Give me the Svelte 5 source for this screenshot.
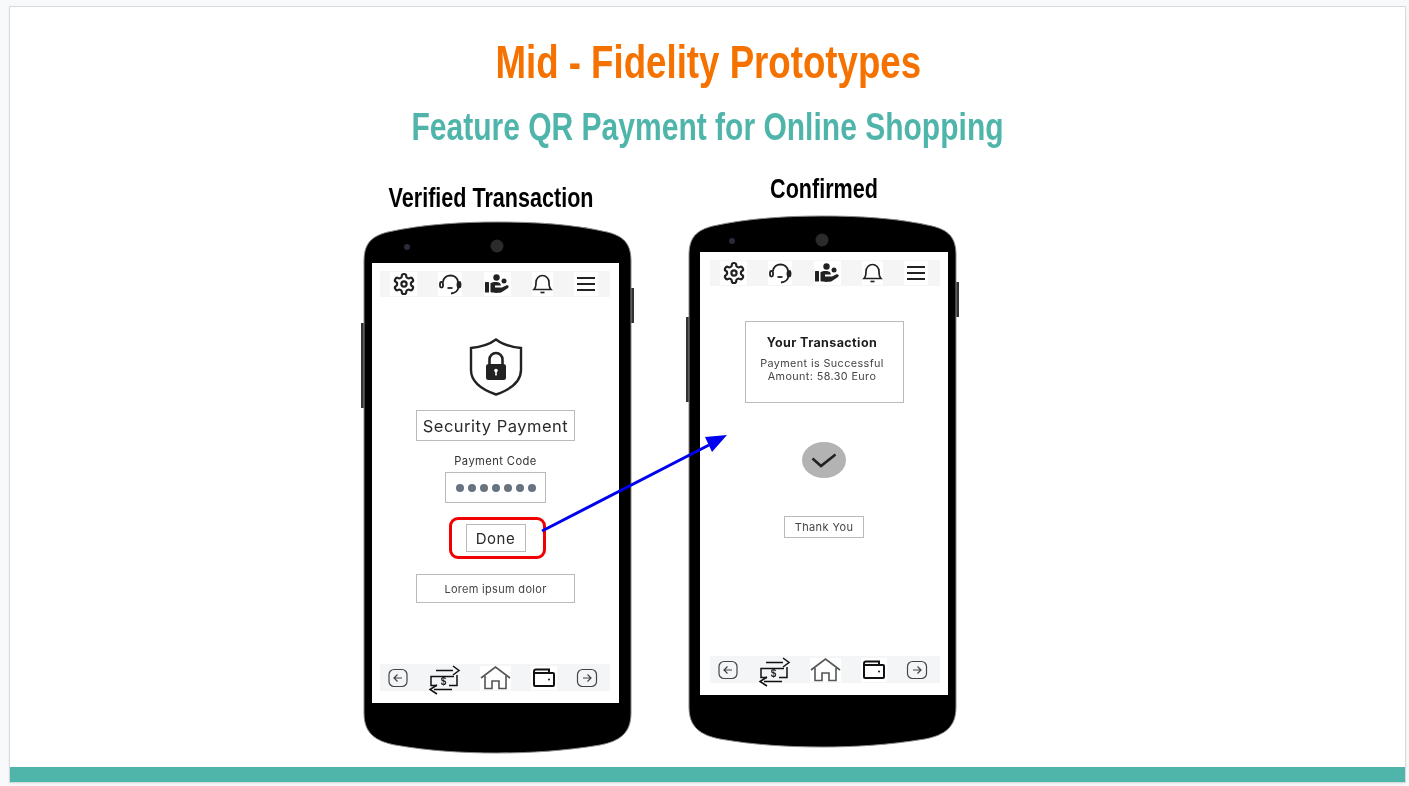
<script>
  // Mid-fidelity prototype slide: two phone mockups joined by an arrow
</script>

{#snippet topBar()}
  <div class="bar top-bar">
    <span class="icon-box" style="width:27px">
      <svg width="24" height="24" viewBox="0 0 24 24" fill="none" stroke="#222" stroke-width="2.200">
        <path d="M12.22 2h-.44a2 2 0 0 0-2 2v.18a2 2 0 0 1-1 1.73l-.43.25a2 2 0 0 1-2 0l-.15-.08a2 2 0 0 0-2.73.73l-.22.38a2 2 0 0 0 .73 2.73l.15.1a2 2 0 0 1 1 1.72v.51a2 2 0 0 1-1 1.74l-.15.09a2 2 0 0 0-.73 2.73l.22.38a2 2 0 0 0 2.73.73l.15-.08a2 2 0 0 1 2 0l.43.25a2 2 0 0 1 1 1.73V20a2 2 0 0 0 2 2h.44a2 2 0 0 0 2-2v-.18a2 2 0 0 1 1-1.73l.43-.25a2 2 0 0 1 2 0l.15.08a2 2 0 0 0 2.73-.73l.22-.39a2 2 0 0 0-.73-2.73l-.15-.08a2 2 0 0 1-1-1.74v-.5a2 2 0 0 1 1-1.74l.15-.09a2 2 0 0 0 .73-2.73l-.22-.38a2 2 0 0 0-2.73-.73l-.15.08a2 2 0 0 1-2 0l-.43-.25a2 2 0 0 1-1-1.73V4a2 2 0 0 0-2-2z" />
        <circle cx="12" cy="12" r="2.600" />
      </svg>
    </span>
    <span class="icon-box" style="width:24px">
      <svg width="24" height="24" viewBox="0 0 24 24" fill="none" stroke="#222" stroke-width="1.800">
        <path d="M5 10 C5.500 5.500 9 3.500 12.500 3.500 C16 3.500 19.500 5.500 20 10" />
        <path d="M20.500 15 C20 19 17 21 13 21.500" />
        <path d="M9.500 16h5" />
        <rect x="2" y="10" width="3" height="5.500" rx="1.500" />
        <rect x="19.500" y="10" width="3" height="5.500" rx="1.500" fill="#222" />
      </svg>
    </span>
    <span class="icon-box" style="width:27px">
      <svg width="26" height="20" viewBox="0 0 26 20" fill="#222">
        <circle cx="12.500" cy="3.500" r="3.200" />
        <circle cx="20" cy="7" r="2.500" />
        <rect x="1" y="8" width="4" height="10.500" rx="0.500" />
        <path d="M6.500 9 C9 7.500 14 7.500 16 9 L17 11.500 L11 11.500 L11 13.500 L18 13.500 L22 11.500 C24.500 10.500 25.500 12.500 24 14 L18 18 C16 19.200 9 19.200 6.500 18z" />
      </svg>
    </span>
    <span class="icon-box" style="width:21px">
      <svg width="21" height="20" viewBox="0 0 21 20" fill="none" stroke="#222" stroke-width="1.700">
        <path d="M2 15.500h17 C17 13.500 17 12 17 8.500 C17 4.500 14 1.500 10.500 1.500 C7 1.500 4 4.500 4 8.500 C4 12 4 13.500 2 15.500z" />
        <path d="M8.500 18.500h4" />
      </svg>
    </span>
    <span class="icon-box" style="width:24px">
      <svg width="20" height="16" viewBox="0 0 20 16" fill="none" stroke="#222" stroke-width="2">
        <path d="M1 2h18M1 8h18M1 14h18" />
      </svg>
    </span>
  </div>
{/snippet}

{#snippet bottomBar()}
  <div class="bar bottom-bar">
    <svg width="20" height="20" viewBox="0 0 20 20" fill="none" stroke="#444" stroke-width="1.200">
      <rect x="1" y="1.500" width="18" height="17" rx="5" />
      <path d="M14 10H6M9.500 6.500 6 10l3.500 3.500" />
    </svg>
    <svg class="transfer" width="33" height="28" viewBox="0 0 33 28" fill="none" stroke="#111" stroke-width="1.500">
      <path d="M8 6.500h17M25 2l6 4.500-6 4.500" />
      <path d="M26 12.500H3v9h6M29 11v10.500h-8" />
      <path d="M24 25.500H6M9 21 2 25.500 9 30" />
      <text x="15.500" y="21" class="dollar">$</text>
    </svg>
    <span class="icon-box" style="width:31px">
      <svg width="31" height="24" viewBox="0 0 31 24" fill="none" stroke="#555" stroke-width="1.600">
        <path d="M1 12 15.500 1 30 12" />
        <path d="M5 10v12.500h7V15h7v7.500h7V10" />
      </svg>
    </span>
    <span class="icon-box" style="width:26px">
      <svg width="23" height="20" viewBox="0 0 23 20" fill="none" stroke="#111" stroke-width="2">
        <path d="M2 17V3.500C2 2 3 1.500 4 1.500h13v3" />
        <rect x="2" y="5" width="20" height="13" rx="1" />
        <circle cx="17" cy="11.500" r="1" fill="#111" stroke="none" />
      </svg>
    </span>
    <svg width="22" height="20" viewBox="0 0 22 20" fill="none" stroke="#444" stroke-width="1.200">
      <rect x="1.500" y="1.500" width="19" height="17" rx="5" />
      <path d="M7 10h8M11.500 6.500 15 10l-3.500 3.500" />
    </svg>
  </div>
{/snippet}

{#snippet body()}
  <svg class="phone-body" width="273" height="533" viewBox="-3 0 273 533">
    <rect x="-3" y="102" width="4" height="85" fill="#333" />
    <rect x="266" y="67" width="4" height="35" fill="#333" />
    <path
      d="M0 40 C0 22 8 15 24 11 C60 3 100 1 133 1 C170 1 208 3 243 11 C259 15 267 22 267 40 L267 492 C267 512 256 520 236 524 C200 530 165 532 133 532 C100 532 65 530 31 524 C11 520 0 512 0 492Z"
      fill="#000"
      stroke="#888"
      stroke-width="1"
    />
    <circle cx="43" cy="26" r="3" fill="#2a2a3c" />
    <circle cx="133" cy="25" r="6.500" fill="#2b2b2b" />
  </svg>
{/snippet}

<div class="page">
  <div class="slide">
    <h1>Mid - Fidelity Prototypes</h1>
    <h2>Feature QR Payment for Online Shopping</h2>

    <div class="stage">
      <section class="col col-verified">
        <h3><span>Verified Transaction</span></h3>
        <div class="phone">
          {@render body()}
          <div class="screen">
            {@render topBar()}
            <svg class="shield" width="54" height="58" viewBox="0 0 54 58">
              <path d="M27 1.500 C33 6 42 9 52 10 V32 C52 44 40 52 27 56.500 C14 52 2 44 2 32 V10 C12 9 21 6 27 1.500Z" fill="none" stroke="#222" stroke-width="2.400" />
              <path d="M20.500 27v-5.500a6.500 6.500 0 0 1 13 0V27" fill="none" stroke="#222" stroke-width="2.600" />
              <rect x="17" y="26" width="20" height="16" rx="2.500" fill="#222" />
              <circle cx="27" cy="32.500" r="1.800" fill="#fff" />
              <rect x="26.200" y="33" width="1.600" height="4.500" fill="#fff" />
            </svg>
            <div class="box security">Security Payment</div>
            <div class="code-label">Payment Code</div>
            <div class="box code">
              {#each Array(7) as _}
                <span class="dot"></span>
              {/each}
            </div>
            <div class="done-ring">
              <div class="box done">Done</div>
            </div>
            <div class="box lorem">Lorem ipsum dolor</div>
            {@render bottomBar()}
          </div>
        </div>
      </section>

      <section class="col col-confirmed">
        <h3><span>Confirmed</span></h3>
        <div class="phone">
          {@render body()}
          <div class="screen">
            {@render topBar()}
            <div class="box summary">
              <strong>Your Transaction</strong>
              <p>Payment is Successful<br />Amount: 58.30 Euro</p>
            </div>
            <div class="check">
              <svg width="26" height="15" viewBox="0 0 26 15" fill="none" stroke="#222" stroke-width="2.600">
                <path d="M1.500 5.500 10 13 24.500 1.500" />
              </svg>
            </div>
            <div class="box thanks">Thank You</div>
            {@render bottomBar()}
          </div>
        </div>
      </section>

      <svg class="arrow" width="200" height="110" viewBox="0 0 200 110">
        <line x1="7" y1="100" x2="174" y2="14" stroke="#0000f0" stroke-width="3" />
        <polygon points="192,4 170,6 177,21" fill="#0000f0" />
      </svg>
    </div>

    <div class="footer-band"></div>
  </div>
</div>

<style>
  :global(body) {
    margin: 0;
    background: #f8f9fa;
  }

  .page {
    height: 786px;
    box-sizing: border-box;
    padding: 7px 4px 4px 10px;
    overflow: hidden;
  }

  .slide {
    height: 100%;
    display: flex;
    flex-direction: column;
    background: #fff;
    box-shadow: 0 0 0 1px #d9d9d9, 0 1px 3px rgba(0, 0, 0, 0.12);
    font-family: "Liberation Sans", sans-serif;
  }

  h1,
  h2,
  h3 {
    margin: 0;
    text-align: center;
    font-weight: 700;
    white-space: nowrap;
  }

  /* no narrow face is installed, so the headings are squeezed sideways */
  h1 {
    margin-top: 27px;
    padding-left: 2px;
    font-size: 47px;
    line-height: 56px;
    color: #f57200;
    transform: scaleX(0.78);
  }

  h2 {
    margin-top: 11px;
    font-size: 39.500px;
    line-height: 50px;
    color: #4fb5ab;
    transform: scaleX(0.76);
  }

  .stage {
    flex: 1;
    min-height: 0;
    position: relative;
    display: flex;
    align-items: flex-start;
    padding-left: 354px;
    gap: 58px;
  }

  .col {
    width: 267px;
    flex: none;
  }

  h3 {
    display: flex;
    justify-content: center;
    font-size: 28px;
    line-height: 34px;
    color: #000;
  }

  h3 span {
    transform: scaleX(0.77);
  }

  .col-verified {
    margin-top: 30px;
  }

  .col-verified h3 {
    margin-right: 13px;
    margin-bottom: 6px;
  }

  .col-confirmed {
    margin-top: 21px;
  }

  .col-confirmed h3 {
    margin-left: 3px;
    margin-bottom: 9px;
  }

  .phone {
    position: relative;
    height: 533px;
    filter: blur(0.45px);
  }

  .phone-body {
    position: absolute;
    top: 0;
    left: -3px;
  }

  .screen {
    position: absolute;
    display: flex;
    flex-direction: column;
    align-items: center;
    box-sizing: border-box;
    background: #fff;
    font-family: Inter, "Liberation Sans", sans-serif;
    color: #333;
  }

  .col-verified .screen {
    left: 8px;
    top: 42px;
    width: 247px;
    height: 440px;
    padding: 8px 0 12px;
  }

  .col-confirmed .screen {
    left: 11px;
    top: 37px;
    width: 248px;
    height: 443px;
    padding: 8px 0 12px;
  }

  .bar {
    flex: none;
    align-self: flex-start;
    width: 230px;
    height: 26px;
    display: flex;
    align-items: center;
    justify-content: space-between;
    box-sizing: border-box;
  }

  .col-verified .bar {
    margin-left: 8px;
  }

  .col-confirmed .bar {
    margin-left: 10px;
  }

  .top-bar {
    background: #f5f5f5;
    padding: 0 12px 0 10px;
  }

  .col-verified .bottom-bar,
  .col-confirmed .bottom-bar {
    margin-top: auto;
  }

  .bottom-bar {
    height: 27px;
    background: #f4f5f7;
    padding: 0 12px 0 8px;
  }

  .icon-box {
    display: flex;
    align-items: center;
    justify-content: center;
    height: 24px;
    background: #fff;
  }

  .dollar {
    font-family: "Liberation Sans", sans-serif;
    font-size: 10px;
    font-weight: 700;
    fill: #222;
    stroke: none;
    text-anchor: middle;
  }

  .transfer {
    overflow: visible;
  }

  .box {
    flex: none;
    display: flex;
    align-items: center;
    justify-content: center;
    box-sizing: border-box;
    border: 1px solid #bbb;
    background: #fff;
  }

  .shield {
    flex: none;
    margin-top: 41px;
    margin-bottom: 14px;
  }

  .security {
    width: 159px;
    height: 31px;
    font-size: 16.500px;
    letter-spacing: 0.5px;
    white-space: nowrap;
    color: #2a2a2a;
  }

  .code-label {
    margin-top: 13px;
    font-size: 11.200px;
    line-height: 14px;
    letter-spacing: 0.4px;
  }

  .code {
    width: 101px;
    height: 31px;
    margin-top: 4px;
    gap: 4px;
  }

  .dot {
    width: 8px;
    height: 8px;
    border-radius: 50%;
    background: #667380;
  }

  .done-ring {
    flex: none;
    display: flex;
    align-items: center;
    justify-content: center;
    box-sizing: border-box;
    width: 97px;
    height: 42px;
    margin: 14px 0 0 4px;
    padding-right: 4px;
    border: 3px solid #f00000;
    border-radius: 9px;
  }

  .done {
    width: 60px;
    height: 28px;
    font-size: 15px;
    letter-spacing: 0.5px;
    color: #2a2a2a;
  }

  .lorem {
    width: 159px;
    height: 29px;
    margin-top: 15px;
    font-size: 11px;
    letter-spacing: 0.3px;
    color: #444;
  }

  .summary {
    flex-direction: column;
    justify-content: flex-start;
    width: 159px;
    height: 82px;
    margin-top: 35px;
    padding: 13px 4px 0 0;
  }

  .summary strong {
    font-size: 12.500px;
    line-height: 15px;
    letter-spacing: 0.4px;
    font-weight: 700;
    color: #1c1c1c;
  }

  .summary p {
    margin: 8px 0 0;
    font-size: 10.800px;
    line-height: 12.500px;
    letter-spacing: 0.4px;
    text-align: center;
    white-space: nowrap;
    color: #444;
  }

  .check {
    flex: none;
    display: flex;
    align-items: center;
    justify-content: center;
    width: 44px;
    height: 36px;
    margin-top: 39px;
    border-radius: 50%;
    background: #b3b3b3;
  }

  .thanks {
    width: 80px;
    height: 22px;
    margin-top: 38px;
    font-size: 11px;
    letter-spacing: 0.4px;
    color: #444;
  }

  .arrow {
    position: absolute;
    left: 525px;
    top: 280px;
  }

  .footer-band {
    flex: none;
    height: 15px;
    background: #4fb5ab;
  }
</style>
